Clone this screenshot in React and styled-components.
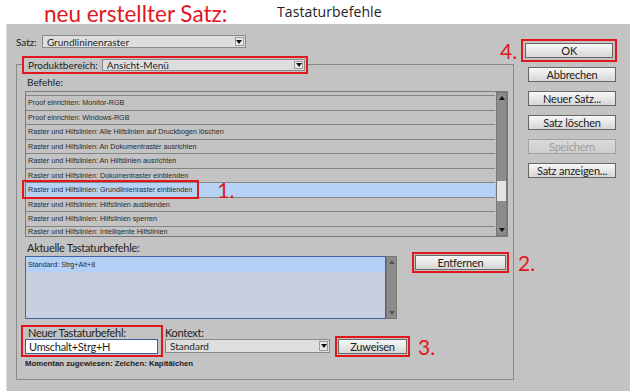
import React from 'react';
import styled, { createGlobalStyle } from 'styled-components';

const RED = '#e2161d';
const PANEL = '#c3c3c3';

const GlobalStyle = createGlobalStyle`
	html, body {
		margin : 0;
		padding : 0;
		background : #fff;
	}
	body {
		font-family : Lato, "Open Sans", sans-serif;
		color : #1e1e1e;
	}
`;

const Page = styled.div`
	width : 630px;
	height : 391px;
	overflow : hidden;
	background : #fff;
	display : flex;
	flex-direction : column;
`;

const TitleBar = styled.div`
	height : 24px;
	flex-shrink : 0;
	display : flex;
	align-items : flex-start;
	padding-left : 44px;
`;

const Heading = styled.div`
	width : 233px;
	font-family : Lato, sans-serif;
	font-size : 22.5px;
	line-height : normal;
	color : ${RED};
	white-space : nowrap;
`;

const Title = styled.div`
	margin-top : 4px;
	font-family : "Open Sans", sans-serif;
	font-size : 14px;
	line-height : 16px;
	letter-spacing : 0.1px;
	color : #222;
`;

const Dialog = styled.div`
	flex : 1;
	margin-left : 6px;
	background : ${PANEL};
	border-left : 1px solid #dcdcdc;
	display : flex;
	padding : 10px 0 0 9px;
	position : relative;
`;

const LeftCol = styled.div`
	width : 498px;
	display : flex;
	flex-direction : column;
`;

const SetRow = styled.div`
	height : 15px;
	display : flex;
	align-items : center;
	gap : 5px;
`;

const Label = styled.div`
	font-size : ${props => props.size || 10}px;
	line-height : ${props => props.line || 16}px;
	letter-spacing : ${props => props.size > 10 ? '-0.3px' : '0'};
	margin-left : ${props => props.indent || 0}px;
	white-space : nowrap;
	flex-shrink : 0;
`;

const SelectBox = styled.div`
	width : ${props => props.width ? props.width + 'px' : 'auto'};
	flex : ${props => props.width ? 'none' : 1};
	height : ${props => props.height || 13}px;
	box-sizing : border-box;
	background : #dedede;
	border : 1px solid #8a8a8a;
	display : flex;
	align-items : center;
	font-size : 10px;
	padding-left : 4px;
	padding-right : 1px;
`;

const SelectText = styled.span`
	flex : 1;
	white-space : nowrap;
	overflow : hidden;
`;

const ArrowBox = styled.div`
	width : 9px;
	height : calc(100% - 2px);
	box-sizing : border-box;
	border : 1px solid #9a9a9a;
	background : #e9e9e9;
	display : flex;
	align-items : center;
	justify-content : center;
`;

const Triangle = styled.div`
	width : 0;
	height : 0;
	border-left : 3px solid transparent;
	border-right : 3px solid transparent;
	${props => props.up
		? `border-bottom : 4px solid ${props.color || '#111'};`
		: `border-top : 4px solid ${props.color || '#111'};`}
`;

const GroupBox = styled.div`
	margin-top : 15px;
	height : 316px;
	box-sizing : border-box;
	border : 1px solid #8a8a8a;
	padding : 0 5px 0 8px;
	display : flex;
	flex-direction : column;
`;

const Marked = styled.div`
	border : 2px solid ${RED};
	padding : ${props => props.pad || 0}px;
	box-sizing : border-box;
	flex-shrink : 0;
`;

const ProductMarked = styled(Marked)`
	margin-top : -9px;
	margin-left : -3px;
	width : 286px;
	height : 18px;
	background : ${PANEL};
	display : flex;
	align-items : center;
	padding : 0 1px 0 4px;
	gap : 4px;
`;

const CommandList = styled.div`
	margin-top : 1px;
	height : 146px;
	box-sizing : border-box;
	border : 1px solid #7a7a7a;
	display : flex;
`;

const Rows = styled.div`
	flex : 1;
	padding-top : 3px;
	padding-right : 1px;
`;

const Row = styled.div`
	height : ${props => props.cut ? 9.5 : 14.5}px;
	overflow : ${props => props.cut ? 'hidden' : 'visible'};
	box-sizing : border-box;
	border-top : 1px solid #858585;
	background : ${props => props.selected ? '#b6d3f5' : 'transparent'};
	display : flex;
	align-items : ${props => props.cut ? 'flex-start' : 'center'};
	padding-left : 2px;
	font-family : "Liberation Sans", Arial, sans-serif;
	font-size : 7.2px;
	color : #2a2a2a;
	white-space : nowrap;
`;

const RowMark = styled.span`
	margin-left : -6px;
	height : 19px;
	box-sizing : border-box;
	border : 2px solid ${RED};
	padding : 0 5px 0 4px;
	display : flex;
	align-items : center;
`;

const Step = styled.span`
	font-family : Lato, sans-serif;
	font-size : 21px;
	line-height : 1;
	color : ${RED};
	margin-left : ${props => props.gap || 0}px;
	flex-shrink : 0;
`;

const ScrollTrack = styled.div`
	width : 11px;
	box-sizing : border-box;
	background : #8c8c8c;
	border : 1px solid #777;
	display : flex;
	flex-direction : column;
	align-items : center;
	justify-content : space-between;
	padding : 3px 0;
	position : relative;
`;

const Thumb = styled.div`
	position : absolute;
	left : 0;
	right : 0;
	height : 20px;
	background : #e4e4e4;
`;

const MidRow = styled.div`
	display : flex;
	align-items : flex-start;
	margin-top : 3px;
`;

const MidLeft = styled.div`
	display : flex;
	flex-direction : column;
`;

const CurrentBox = styled.div`
	width : 372px;
	height : 63px;
	display : flex;
`;

const CurrentArea = styled.div`
	flex : 1;
	box-sizing : border-box;
	border : 1px solid #3f63a3;
	background : #c6d0df;
`;

const CurrentRow = styled.div`
	height : 15px;
	background : #b3d1f7;
	font-family : "Liberation Sans", Arial, sans-serif;
	font-size : 7.2px;
	line-height : 15px;
	padding-left : 2px;
	color : #2a2a2a;
`;

const ActionWrap = styled.div`
	display : flex;
	align-items : center;
	margin-left : ${props => props.left || 0}px;
	margin-top : ${props => props.top || 0}px;
`;

const Button = styled.div`
	width : ${props => props.width}px;
	height : 15px;
	box-sizing : border-box;
	border : 1px solid ${props => props.disabled ? '#a2a2a2' : '#666'};
	background : ${props => props.disabled
		? 'linear-gradient(#dadada, #cdcdcd)'
		: 'linear-gradient(#f8f8f8, #d6d6d6)'};
	color : ${props => props.disabled ? '#9c9c9c' : '#202020'};
	font-family : Lato, sans-serif;
	font-size : 11px;
	letter-spacing : -0.2px;
	display : flex;
	align-items : center;
	justify-content : center;
	white-space : nowrap;
	flex-shrink : 0;
`;

const BottomRow = styled.div`
	display : flex;
	align-items : flex-start;
	margin-top : 6px;
`;

const NewKeyMarked = styled(Marked)`
	margin-left : -4px;
	width : 142px;
	height : 32px;
	padding : 0 3px 0 2px;
`;

const KeyInput = styled.div`
	height : 15px;
	box-sizing : border-box;
	border : 1px solid #3d5e9c;
	background : #fff;
	font-size : 11px;
	letter-spacing : -0.3px;
	line-height : 13px;
	padding-left : 3px;
	white-space : nowrap;
`;

const ContextCol = styled.div`
	margin-left : 2px;
	margin-top : 2px;
	display : flex;
	flex-direction : column;
`;

const Note = styled.div`
	margin-top : 2px;
	font-family : "Liberation Sans", Arial, sans-serif;
	font-weight : bold;
	font-size : 7.8px;
	line-height : 10px;
	color : #222;
`;

const RightCol = styled.div`
	margin-left : 10px;
	padding-top : 5px;
	display : flex;
	flex-direction : column;
	align-items : flex-start;
`;

const OkRow = styled.div`
	display : flex;
	align-items : center;
	margin-left : -24px;
	gap : 4px;
`;

const SideButton = styled(Button)`
	margin-left : 4px;
	margin-top : ${props => props.first ? 5 : 9}px;
`;

const commands = [
	'Proof einrichten: Monitor-RGB',
	'Proof einrichten: Windows-RGB',
	'Raster und Hilfslinien: Alle Hilfslinien auf Druckbogen löschen',
	'Raster und Hilfslinien: An Dokumentraster ausrichten',
	'Raster und Hilfslinien: An Hilfslinien ausrichten',
	'Raster und Hilfslinien: Dokumentraster einblenden',
	'Raster und Hilfslinien: Grundlinienraster einblenden',
	'Raster und Hilfslinien: Hilfslinien ausblenden',
	'Raster und Hilfslinien: Hilfslinien sperren',
	'Raster und Hilfslinien: Intelligente Hilfslinien',
];

const SELECTED = 6;

function Select({ value, width, height }) {
	return (
		<SelectBox width={width} height={height}>
			<SelectText>{value}</SelectText>
			<ArrowBox><Triangle /></ArrowBox>
		</SelectBox>
	);
}

function ScrollBar({ thumbTop, arrowColor }) {
	return (
		<ScrollTrack>
			<Triangle up color={arrowColor} />
			{thumbTop != null && <Thumb style={{ top: thumbTop }} />}
			<Triangle color={arrowColor} />
		</ScrollTrack>
	);
}

function App() {
	return (
		<Page>
			<GlobalStyle />
			<TitleBar>
				<Heading>neu erstellter Satz:</Heading>
				<Title>Tastaturbefehle</Title>
			</TitleBar>
			<Dialog>
				<LeftCol>
					<SetRow>
						<Label>Satz:</Label>
						<Select value="Grundlininenraster" width={204} />
					</SetRow>
					<GroupBox>
						<ProductMarked>
							<Label>Produktbereich:</Label>
							<Select value="Ansicht-Menü" height={12} />
						</ProductMarked>
						<Label indent={2}>Befehle:</Label>
						<CommandList>
							<Rows>
								{commands.map((c, i) => (
									<Row key={c} selected={i === SELECTED} cut={i === commands.length - 1}>
										{i === SELECTED ? (
											<>
												<RowMark>{c}</RowMark>
												<Step gap={18}>1.</Step>
											</>
										) : c}
									</Row>
								))}
							</Rows>
							<ScrollBar thumbTop={88} />
						</CommandList>
						<MidRow>
							<MidLeft>
								<Label size={11} indent={2}>Aktuelle Tastaturbefehle:</Label>
								<CurrentBox>
									<CurrentArea>
										<CurrentRow>Standard: Strg+Alt+8</CurrentRow>
									</CurrentArea>
									<ScrollBar arrowColor="#555" />
								</CurrentBox>
							</MidLeft>
							<ActionWrap left={15} top={12}>
								<Marked pad={1}>
									<Button width={91}>Entfernen</Button>
								</Marked>
								<Step gap={9}>2.</Step>
							</ActionWrap>
						</MidRow>
						<BottomRow>
							<NewKeyMarked>
								<Label size={11} line={12} indent={3}>Neuer Tastaturbefehl:</Label>
								<KeyInput>Umschalt+Strg+H</KeyInput>
							</NewKeyMarked>
							<ContextCol>
								<Label size={11} line={12}>Kontext:</Label>
								<Select value="Standard" width={165} height={14} />
							</ContextCol>
							<ActionWrap left={5} top={11}>
								<Marked pad={1}>
									<Button width={69}>Zuweisen</Button>
								</Marked>
								<Step gap={8}>3.</Step>
							</ActionWrap>
						</BottomRow>
						<Note>Momentan zugewiesen: Zeichen: Kapitälchen</Note>
					</GroupBox>
				</LeftCol>
				<RightCol>
					<OkRow>
						<Step>4.</Step>
						<Marked pad={2}>
							<Button width={88}>OK</Button>
						</Marked>
					</OkRow>
					<SideButton width={88} first>Abbrechen</SideButton>
					<SideButton width={88}>Neuer Satz...</SideButton>
					<SideButton width={88}>Satz löschen</SideButton>
					<SideButton width={88} disabled>Speichern</SideButton>
					<SideButton width={88}>Satz anzeigen...</SideButton>
				</RightCol>
			</Dialog>
		</Page>
	);
}

export default App;
